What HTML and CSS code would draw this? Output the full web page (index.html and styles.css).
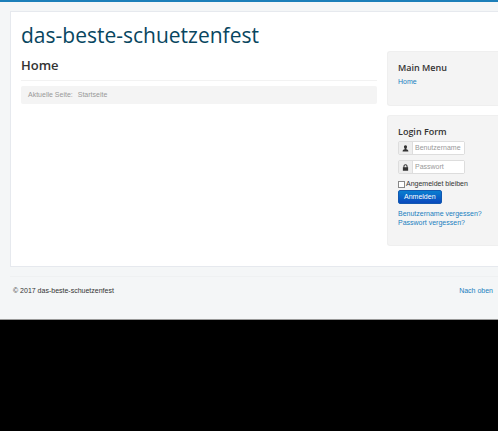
FILE: index.html
```html
<!DOCTYPE html>
<html lang="de">
<head>
    <meta charset="UTF-8">
    <title>Home</title>
    <link rel="stylesheet" href="styles.css">
</head>
<body>
<div class="page" id="top">
    <div class="container">
        <header class="header">
            <span class="site-title">das-beste-schuetzenfest</span>
        </header>
        <div class="row">
            <main class="content">
                <h2 class="page-header">Home</h2>
                <div class="breadcrumb">
                    <span>Aktuelle Seite:</span>
                    <span>Startseite</span>
                </div>
            </main>
            <aside class="sidebar">
                <nav class="well">
                    <h3>Main Menu</h3>
                    <a href="#">Home</a>
                </nav>
                <form class="well well-login">
                    <h3>Login Form</h3>
                    <div class="input-group">
                        <label class="add-on" for="username" aria-label="Benutzername">
                            <svg viewBox="0 0 12 12"><path d="M6 0.5C4 0.5 3.2 2 3.4 3.6C3.6 5 4.1 5.8 4.6 6.3V7.4C3 8 1 8.4 1 11H11C11 8.4 9 8 7.4 7.4V6.3C7.9 5.8 8.4 5 8.6 3.6C8.8 2 8 0.5 6 0.5Z"/></svg>
                        </label>
                        <input type="text" id="username" placeholder="Benutzername">
                    </div>
                    <div class="input-group">
                        <label class="add-on" for="password" aria-label="Passwort">
                            <svg viewBox="0 0 12 12"><path fill-rule="evenodd" d="M1.5 5.5H2.5V4C2.5 1.8 4 0.5 6 0.5S9.5 1.8 9.5 4V5.5H10.5V11.5H1.5ZM4.2 5.5H7.8V4C7.8 2.8 7 2.1 6 2.1S4.2 2.8 4.2 4Z"/></svg>
                        </label>
                        <input type="password" id="password" placeholder="Passwort">
                    </div>
                    <div class="remember">
                        <input type="checkbox" id="remember">
                        <label for="remember">Angemeldet bleiben</label>
                    </div>
                    <button type="button" class="btn">Anmelden</button>
                    <ul class="links">
                        <li><a href="#">Benutzername vergessen?</a></li>
                        <li><a href="#">Passwort vergessen?</a></li>
                    </ul>
                </form>
            </aside>
        </div>
    </div>
    <footer class="footer">
        <span>© 2017 das-beste-schuetzenfest</span>
        <a href="#top">Nach oben</a>
    </footer>
</div>
</body>
</html>
```
FILE: styles.css
```css
* {
    box-sizing: border-box;
}

html {
    background-color: #000;
}

body {
    margin: 0;
    font-family: "Liberation Sans", Arial, sans-serif;
    font-size: 7px;
    line-height: 10px;
    color: #333;
}

a {
    color: #1a7fc0;
    text-decoration: none;
}

h2, h3 {
    margin: 0;
    font-family: "Open Sans", sans-serif;
    font-weight: 600;
}

.page {
    padding: 9px 0 23px 10px;
    background-color: #f4f6f7;
    border-top: 2px solid #1c7fb9;
    border-bottom: 1px solid #999;
}

.container {
    padding: 8px 0 20px 10px;
    background-color: #fff;
    border: 1px solid #e6e9ee;
    border-right: none;
}

.site-title {
    display: block;
    font-family: "Open Sans", sans-serif;
    font-size: 21px;
    line-height: 31px;
    color: #08465f;
}

.row {
    display: flex;
    gap: 10px;
}

.content {
    flex: 1;
}

.page-header {
    margin-bottom: 5px;
    padding: 5px 0 6px;
    font-size: 13px;
    line-height: 18px;
    border-bottom: 1px solid #f2f2f2;
}

.breadcrumb {
    display: flex;
    gap: 5px;
    padding: 4px 7px;
    color: #999;
    background-color: #f4f4f4;
    border-radius: 2px;
}

.sidebar {
    width: 111px;
}

.well {
    margin-bottom: 9px;
    padding: 9px 10px 18px;
    background-color: #f4f4f4;
    border: 1px solid #efefef;
    border-right: none;
    border-radius: 3px 0 0 3px;
}

.well h3 {
    margin-bottom: 3px;
    font-size: 9px;
    line-height: 13px;
}

.well-login {
    margin-bottom: 0;
}

.input-group {
    display: flex;
    width: 67px;
    height: 14px;
    margin-bottom: 5px;
    border: 1px solid #ddd;
    border-radius: 2px;
}

.add-on {
    display: flex;
    align-items: center;
    justify-content: center;
    width: 14px;
    background-color: #eee;
    border-right: 1px solid #ddd;
}

.add-on svg {
    width: 7px;
    height: 7px;
    fill: #333;
}

.input-group input {
    flex: 1;
    min-width: 0;
    padding: 0 2px;
    font: inherit;
    background-color: #fff;
    border: none;
}

.input-group input::placeholder {
    color: #999;
}

.remember {
    display: flex;
    align-items: center;
    gap: 1px;
}

.remember input {
    appearance: none;
    width: 7px;
    height: 7px;
    margin: 0;
    background-color: #fff;
    border: 1px solid #888;
}

.btn {
    display: block;
    margin: 1px 0 5px;
    padding: 1px 5px;
    font: inherit;
    color: #fff;
    background: linear-gradient(#0a7ed0, #0a48bd);
    border: 1px solid #1258b0;
    border-radius: 2px;
}

.links {
    margin: 0;
    padding: 0;
    line-height: 9px;
    list-style: none;
}

.footer {
    display: flex;
    justify-content: space-between;
    margin-top: 9px;
    padding: 9px 5px 0 3px;
    border-top: 1px solid #eff1f2;
}
```
